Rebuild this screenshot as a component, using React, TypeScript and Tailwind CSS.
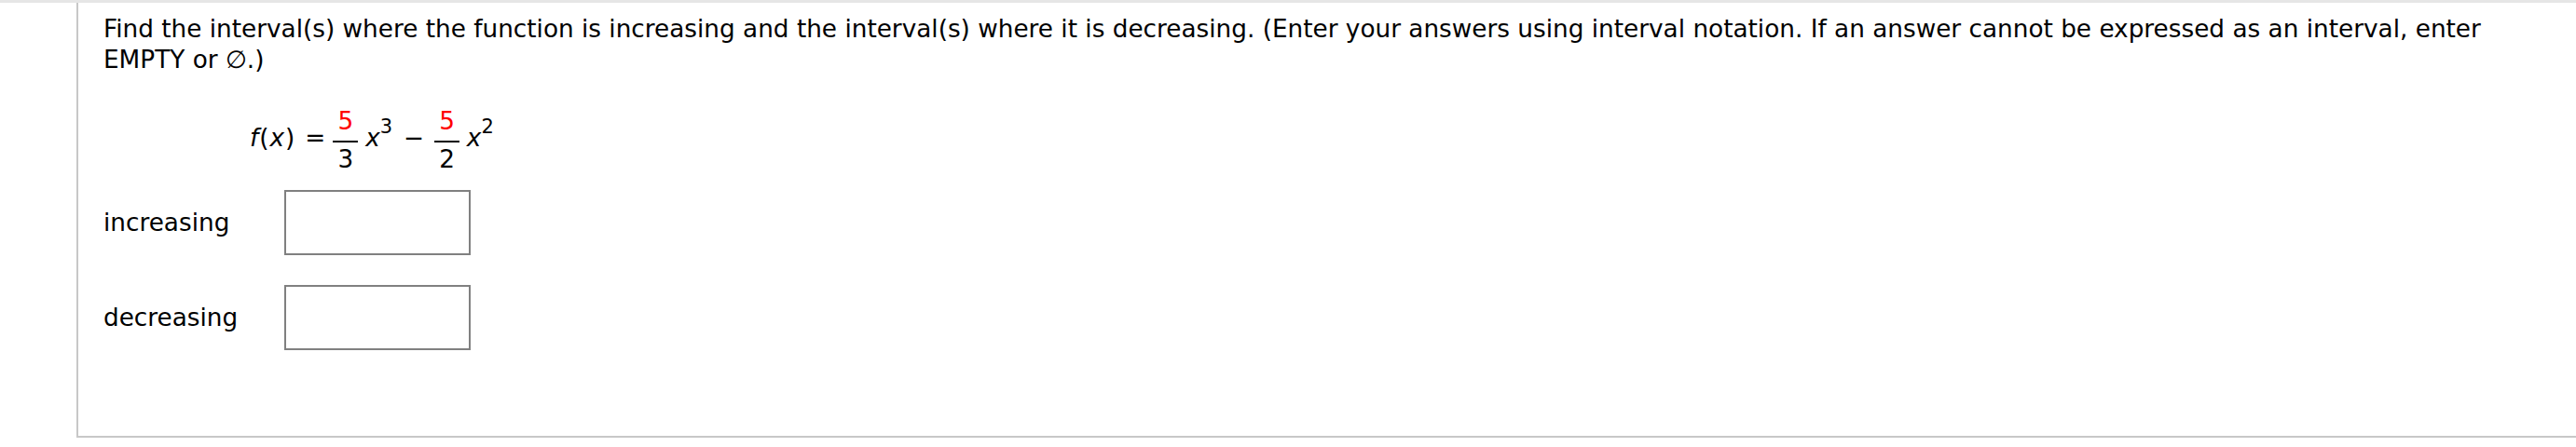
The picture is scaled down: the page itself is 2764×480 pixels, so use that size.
import React from 'react'

function Fraction({ num, den, className = '' }: { num: string; den: string; className?: string }) {
  return (
    <span className={`inline-flex flex-col items-center align-[18px] ${className}`}>
      <span className="w-full border-b-2 border-black px-[5px] pb-[8px] text-center leading-[26px] text-[#ff0000]">
        {num}
      </span>
      <span className="px-[5px] pt-[5px] text-center leading-[26px]">{den}</span>
    </span>
  )
}

function Power({ exp }: { exp: string }) {
  return (
    <>
      <span className="italic">x</span>
      <span className="align-[14px] text-[21px] leading-[21px]">{exp}</span>
    </>
  )
}

function AnswerRow({ label }: { label: string }) {
  return (
    <div className="flex items-center">
      <span className="w-[194px]">{label}</span>
      <div className="h-[70px] w-[200px] border-2 border-[#808080] bg-white" />
    </div>
  )
}

export default function App() {
  return (
    <div
      className="h-[480px] w-full bg-white text-[26.3px] leading-[33px] text-black"
      style={{ fontFamily: '"DejaVu Sans", Verdana, sans-serif' }}
    >
      <div className="h-[3px] w-full bg-[#e6e6e6]" />
      <div className="ml-[82px] h-[467px] border-b-2 border-l-2 border-[#c8c8c8] pl-[27px] pt-[12px]">
        <p className="max-w-[2600px]">
          Find the interval(s) where the function is increasing and the interval(s) where it is
          decreasing. (Enter your answers using interval notation. If an answer cannot be expressed
          as an interval, enter EMPTY or ∅.)
        </p>

        {/* f(x) = 5/3 x^3 - 5/2 x^2 */}
        <div className="mt-[36px] whitespace-nowrap pl-[157px]">
          <span className="italic">f</span>
          <span className="px-[1px]">(</span>
          <span className="italic">x</span>
          <span className="px-[1px]">)</span>
          <span className="ml-[10px] mr-[8px]">=</span>
          <Fraction num="5" den="3" className="mr-[8px]" />
          <Power exp="3" />
          <span className="ml-[12px] mr-[11px]">−</span>
          <Fraction num="5" den="2" className="mr-[8px]" />
          <Power exp="2" />
        </div>

        <div className="mt-[20px] flex flex-col gap-[32px]">
          <AnswerRow label="increasing" />
          <AnswerRow label="decreasing" />
        </div>
      </div>
    </div>
  )
}
